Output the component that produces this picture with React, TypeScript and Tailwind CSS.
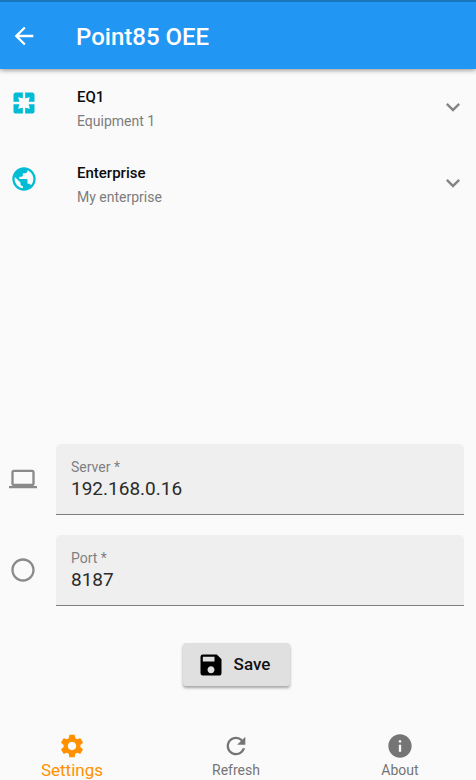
import { useState } from "react";
import type { IconType } from "react-icons";
import {
  MdArrowBack,
  MdComputer,
  MdExpandMore,
  MdInfo,
  MdPages,
  MdPanoramaFishEye,
  MdPublic,
  MdRefresh,
  MdSave,
  MdSettings,
} from "react-icons/md";

type Entity = { name: string; description: string; icon: IconType };

const entities: Entity[] = [
  { name: "EQ1", description: "Equipment 1", icon: MdPages },
  { name: "Enterprise", description: "My enterprise", icon: MdPublic },
];

const tabs: { label: string; icon: IconType }[] = [
  { label: "Settings", icon: MdSettings },
  { label: "Refresh", icon: MdRefresh },
  { label: "About", icon: MdInfo },
];

function EntityRow({ name, description, icon: Icon }: Entity) {
  return (
    <li className="flex h-[76px] items-start px-[9px]">
      <Icon className="mt-3 ml-px size-7 shrink-0 text-[#00bcd4]" />
      <div className="ml-[39px] flex-1 pt-2">
        <div className="text-[15px] leading-6 font-medium text-[#0c0c0c]">{name}</div>
        <div className="text-sm leading-6 text-[#7d7d7d]">{description}</div>
      </div>
      <button type="button" aria-label={"Expand " + name} className="mt-4 text-[#858585]">
        <MdExpandMore className="size-7" />
      </button>
    </li>
  );
}

type FieldProps = { id: string; label: string; initial: string; icon: IconType };

function Field({ id, label, initial, icon: Icon }: FieldProps) {
  const [value, setValue] = useState(initial);
  return (
    <div className="flex items-center pl-[9px] pr-3">
      <Icon className="mb-0.5 size-7 shrink-0 text-[#8a8a8a]" />
      <div className="ml-[19px] h-[71px] min-w-0 flex-1 rounded-t-[5px] border-b border-[#7d7d7d] bg-[#efefef] px-[15px] pt-3.5">
        <label htmlFor={id} className="block text-sm leading-[19px] text-[#7f7f7f]">
          {label}
        </label>
        <input
          id={id}
          value={value}
          onChange={(e) => setValue(e.target.value)}
          className="block h-6 w-full bg-transparent text-[19px] leading-6 text-[#2b2b2b] outline-none"
        />
      </div>
    </div>
  );
}

export default function App() {
  const [active, setActive] = useState("Settings");
  return (
    <div className="flex min-h-screen flex-col bg-[#fafafa] font-[Roboto,sans-serif]">
      <header className="flex h-[69px] items-center border-t-2 border-[#1976b9] bg-[#2196f3] px-2.5 text-white shadow-[0_1px_5px_rgba(0,0,0,0.45)]">
        <button type="button" aria-label="Back">
          <MdArrowBack className="size-7" />
        </button>
        <h1 className="mt-0.5 ml-[38px] text-2xl leading-7 font-medium">Point85 OEE</h1>
      </header>

      <main className="flex flex-1 flex-col">
        <ul className="flex-1 pt-2">
          {entities.map((entity) => (
            <EntityRow key={entity.name} {...entity} />
          ))}
        </ul>
        <form className="flex flex-col gap-5" onSubmit={(e) => e.preventDefault()}>
          <Field id="server" label="Server *" initial="192.168.0.16" icon={MdComputer} />
          <Field id="port" label="Port *" initial="8187" icon={MdPanoramaFishEye} />
          <div className="mt-[17px] flex justify-center pr-[3px]">
            <button
              type="submit"
              className="flex h-[43px] items-center gap-[9px] rounded-[3px] bg-[#e0e0e0] pr-5 pl-3.5 text-[17px] font-medium text-[#111111] shadow-[0_2px_3px_rgba(0,0,0,0.35)]"
            >
              <MdSave className="size-7 text-black" />
              Save
            </button>
          </div>
        </form>
      </main>

      <nav className="mt-[46px] flex h-12 justify-between pr-9 pl-8">
        {tabs.map(({ label, icon: Icon }) => (
          <button
            key={label}
            type="button"
            onClick={() => setActive(label)}
            className={
              active === label
                ? "flex w-20 flex-col items-center text-[17px] leading-5 text-[#ff9100]"
                : "flex w-20 flex-col items-center text-sm leading-5 text-[#757575]"
            }
          >
            <Icon className="size-7 shrink-0" />
            {label}
          </button>
        ))}
      </nav>
    </div>
  );
}
